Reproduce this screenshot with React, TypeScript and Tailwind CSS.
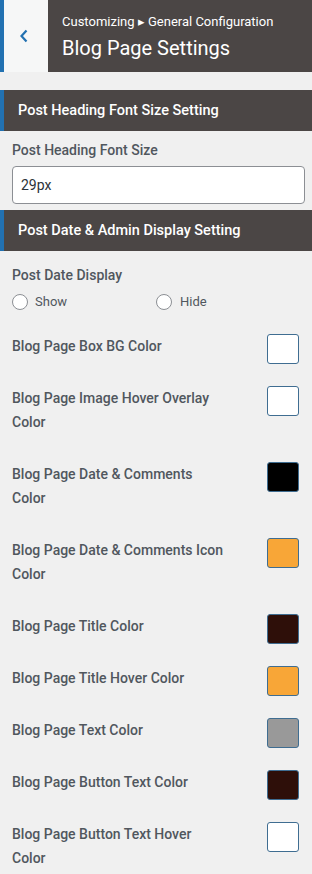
import React from 'react';

interface ColorSetting {
  label: string;
  color: string;
}

const colorSettings: ColorSetting[] = [
  { label: 'Blog Page Box BG Color', color: '#ffffff' },
  { label: 'Blog Page Image Hover Overlay Color', color: '#ffffff' },
  { label: 'Blog Page Date & Comments Color', color: '#000000' },
  { label: 'Blog Page Date & Comments Icon Color', color: '#f8a637' },
  { label: 'Blog Page Title Color', color: '#2e0f09' },
  { label: 'Blog Page Title Hover Color', color: '#f8a637' },
  { label: 'Blog Page Text Color', color: '#999999' },
  { label: 'Blog Page Button Text Color', color: '#2e0f09' },
  { label: 'Blog Page Button Text Hover Color', color: '#ffffff' },
];

function SectionHeader({ title }: { title: string }) {
  return (
    <div className="flex h-[41px] items-center border-l-4 border-[#2271b1] bg-[#4b4645] pl-[14px] text-[14.5px] font-medium text-white">
      {title}
    </div>
  );
}

function ColorRow({ label, color }: ColorSetting) {
  return (
    <div className="mb-[28px] flex items-start justify-between">
      <span className="w-[214px] text-[14px] font-medium leading-6 text-[#50575e]">{label}</span>
      <span
        className="-mb-[6px] mr-[1px] h-[30px] w-[32px] rounded-[3px] border border-[#3f6d91]"
        style={{ backgroundColor: color }}
      />
    </div>
  );
}

export default function App() {
  return (
    <div className="min-h-[874px] w-[312px] bg-[#f0f0f0] font-['Roboto',sans-serif]">
      {/* Encabezado */}
      <div className="flex h-[72px]">
        <button className="flex w-[48px] items-center justify-center border-l-4 border-[#2271b1] bg-[#f6f7f7] pr-1 text-[#2271b1]">
          <svg width="10" height="14" viewBox="0 0 10 14" fill="none">
            <path d="M7.5 1.5 2.5 7l5 5.5" stroke="currentColor" strokeWidth="2.2" />
          </svg>
        </button>
        <div className="flex flex-1 flex-col justify-center bg-[#4b4645] pl-[14px] pt-[2px] text-white">
          <span className="text-[13px] leading-4">Customizing ▸ General Configuration</span>
          <span className="mt-[6px] text-[20px] leading-6">Blog Page Settings</span>
        </div>
      </div>

      <div className="h-[18px]" />

      <SectionHeader title="Post Heading Font Size Setting" />
      <div className="pb-[6px] pl-3 pr-[7px] pt-[9px]">
        <div className="text-[14px] font-medium leading-[20px] text-[#50575e]">Post Heading Font Size</div>
        <div className="mt-[6px] flex h-[38px] items-center rounded-[4px] border border-[#8c8f94] bg-white px-[8px] text-[14px] text-[#2c3338]">
          29px
        </div>
      </div>

      <SectionHeader title="Post Date & Admin Display Setting" />
      <div className="px-3 pt-[14px]">
        <div className="text-[14px] font-medium leading-[20px] text-[#50575e]">Post Date Display</div>
        <div className="mt-[7px] flex items-center text-[13px] text-[#50575e]">
          <label className="flex w-[144px] items-center gap-[7px]">
            <span className="h-[16px] w-[16px] rounded-full border border-[#8c8f94] bg-white" />
            Show
          </label>
          <label className="flex items-center gap-[8px]">
            <span className="h-[16px] w-[16px] rounded-full border border-[#8c8f94] bg-white" />
            Hide
          </label>
        </div>

        <div className="mt-[22px]">
          {colorSettings.map(s => (
            <ColorRow key={s.label} label={s.label} color={s.color} />
          ))}
        </div>
      </div>
    </div>
  );
}
